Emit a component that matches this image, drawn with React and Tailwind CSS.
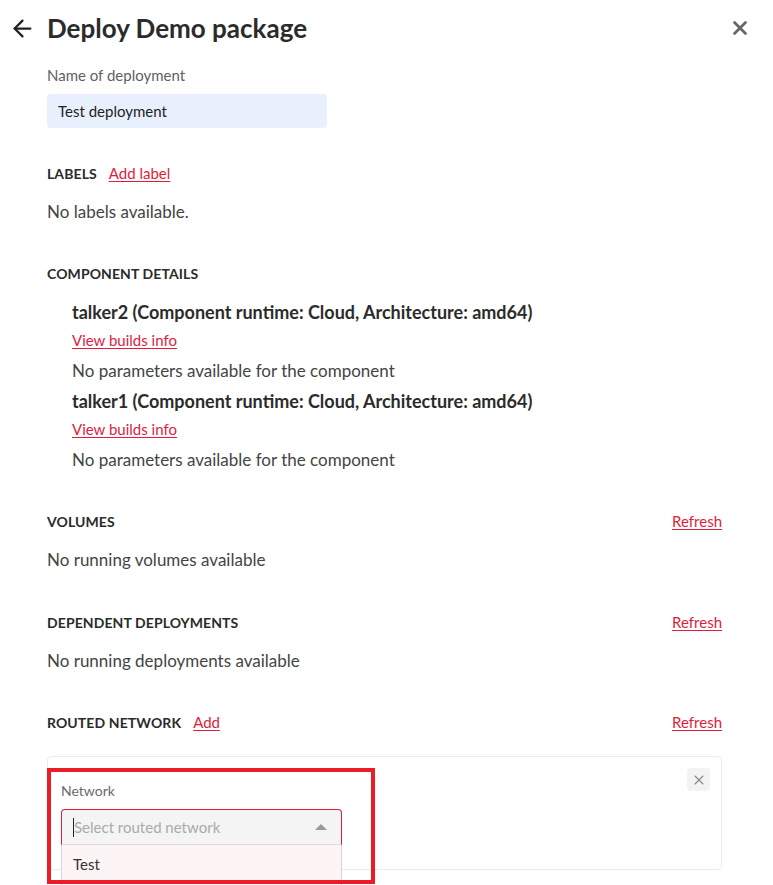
import { ArrowLeft, X } from 'lucide-react';

const font = { fontFamily: 'Lato, "Noto Sans", sans-serif' };

// Judul section dengan link opsional
const SectionHeader = ({ title, addText, refresh, className = '' }) => (
  <div className={`flex items-center h-5 ${className}`}>
    <span className="text-[14px] font-bold text-[#2b2b2b] tracking-[0.1px]">{title}</span>
    {addText && (
      <a href="#" className="ml-3 text-[15px] text-[#e31c3d] underline underline-offset-2">{addText}</a>
    )}
    {refresh && (
      <a href="#" className="ml-auto text-[15px] text-[#e31c3d] underline underline-offset-2">Refresh</a>
    )}
  </div>
);

const ComponentItem = ({ name, first }) => (
  <div className={`flex flex-col ${first ? '' : 'mt-[6px]'}`}>
    <div className="h-6 leading-6 text-[18px] font-bold text-[#2b2b2b]">
      {name} (Component runtime: Cloud, Architecture: amd64)
    </div>
    <a href="#" className="mt-[6px] h-5 leading-5 text-[15px] text-[#e31c3d] underline underline-offset-2 w-fit">
      View builds info
    </a>
    <div className="mt-[9px] h-6 leading-6 text-[17px] text-[#444]">No parameters available for the component</div>
  </div>
);

const App = () => {
  return (
    <div className="w-[773px] h-[885px] overflow-hidden bg-white flex flex-col" style={font}>
      <div className="flex items-center h-14 pl-[9px] pr-[22px] shrink-0">
        <ArrowLeft size={27} strokeWidth={2} className="text-[#222]" />
        <h1 className="ml-[11px] text-[26px] font-bold text-[#2b2b2b]">Deploy Demo package</h1>
        <X size={22} strokeWidth={3} className="ml-auto text-[#666]" />
      </div>

      <div className="pl-[47px] pr-[51px] flex flex-col">
        <div className="mt-[9px] h-5 leading-5 text-[15px] text-[#5f5f5f]">Name of deployment</div>
        <input
          type="text" defaultValue="Test deployment"
          className="mt-[9px] block w-[280px] h-[34px] px-[11px] rounded bg-[#e8f0fe] text-[15px] text-[#222] outline-none"
        />

        <SectionHeader title="LABELS" addText="Add label" className="mt-[35px]" />
        <div className="mt-[17px] h-6 leading-6 text-[17px] text-[#444]">No labels available.</div>

        <SectionHeader title="COMPONENT DETAILS" className="mt-[39px]" />
        <div className="pl-[25px] mt-[17px] flex flex-col">
          <ComponentItem name="talker2" first />
          <ComponentItem name="talker1" />
        </div>

        <SectionHeader title="VOLUMES" refresh className="mt-[39px]" />
        <div className="mt-[17px] h-6 leading-6 text-[17px] text-[#444]">No running volumes available</div>

        <SectionHeader title="DEPENDENT DEPLOYMENTS" refresh className="mt-[40px]" />
        <div className="mt-[17px] h-6 leading-6 text-[17px] text-[#444]">No running deployments available</div>

        <SectionHeader title="ROUTED NETWORK" addText="Add" refresh className="mt-[39px]" />

        <div className="relative mt-[24px] h-[114px] border border-[#ececec] rounded-[4px] pl-[13px] pt-[24px]">
          <button className="absolute top-[11px] right-[11px] w-[23px] h-[23px] rounded bg-[#f3f3f3] flex items-center justify-center">
            <X size={16} strokeWidth={1.6} className="text-[#888]" />
          </button>
          <div className="h-5 leading-5 text-[14px] text-[#6a6a6a]">Network</div>
          <div className="relative mt-[8px] w-[281px]">
            <div className="h-[36px] flex items-center pl-[11px] pr-[14px] bg-[#f4f4f4] border border-[#e31c3d] border-b-[#dcdcdc] rounded-t-[4px]">
              <span className="w-px h-[19px] bg-[#222]" />
              <span className="text-[15px] text-[#aaa]">Select routed network</span>
              <span className="ml-auto w-0 h-0 border-l-[6px] border-r-[6px] border-b-[6px] border-l-transparent border-r-transparent border-b-[#999]" />
            </div>
            <div className="absolute left-0 top-[36px] w-full h-[60px] bg-[#fdf5f5] border-x border-[#d6d6d6]">
              <div className="h-[38px] flex items-center pl-[11px] text-[15px] text-[#333]">Test</div>
            </div>
          </div>
          <div className="absolute left-[-1px] top-[11px] w-[328px] h-[116px] border-4 border-[#ed1c24] pointer-events-none" />
        </div>
      </div>
    </div>
  );
};

export default App;
